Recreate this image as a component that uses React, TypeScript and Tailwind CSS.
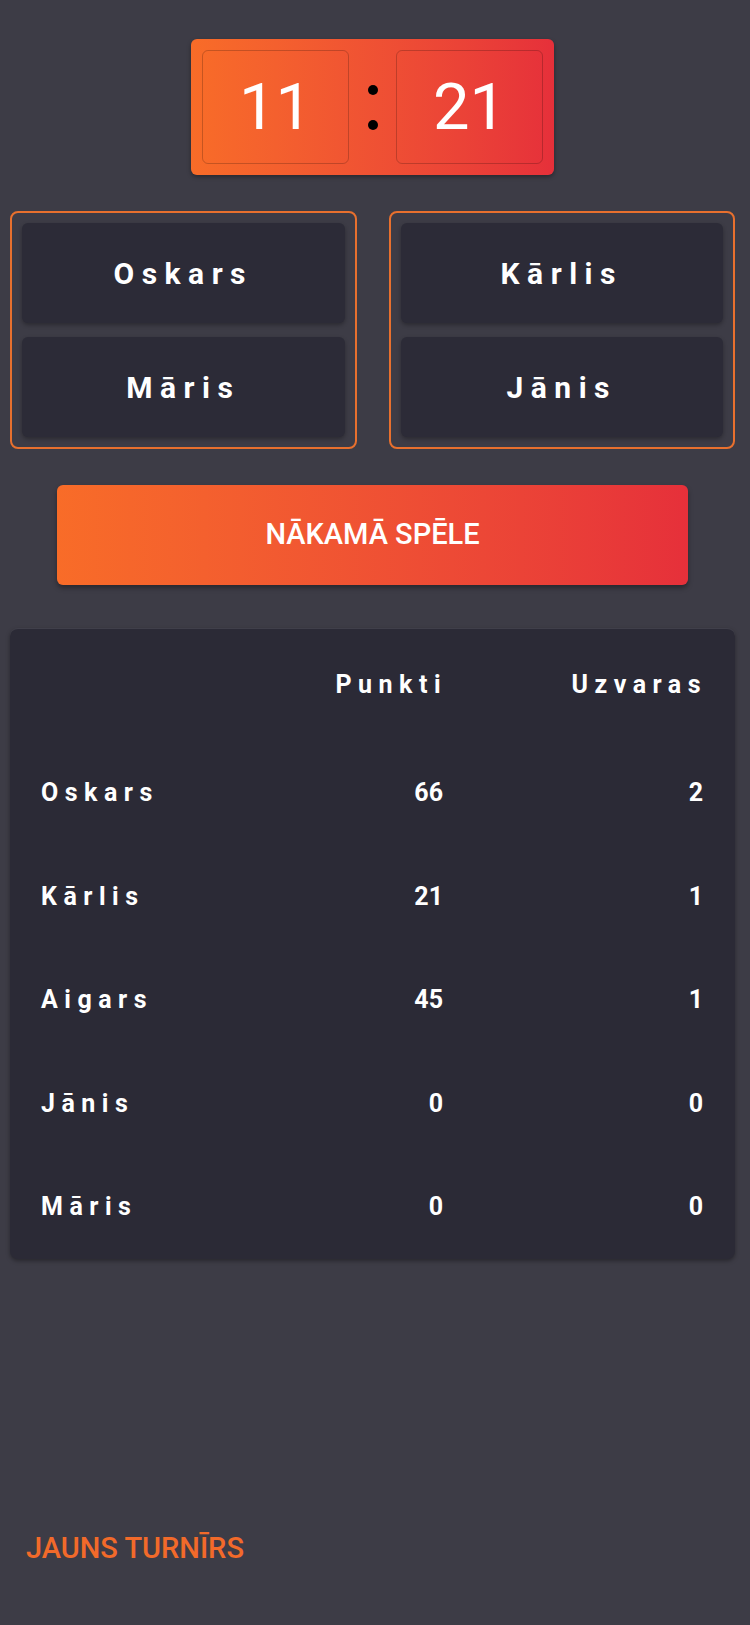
import React from 'react';

const teams = [
    ['Oskars', 'Māris'],
    ['Kārlis', 'Jānis'],
];

const standings = [
    { name: 'Oskars', points: 66, wins: 2 },
    { name: 'Kārlis', points: 21, wins: 1 },
    { name: 'Aigars', points: 45, wins: 1 },
    { name: 'Jānis', points: 0, wins: 0 },
    { name: 'Māris', points: 0, wins: 0 },
];

const ScoreBoard = () => {
    return (
        <div className="flex justify-center">
            <div className="flex items-center p-[11px] rounded-[6px] bg-gradient-to-r from-[#f86c28] to-[#e6303a] shadow-[0_2px_4px_rgba(0,0,0,0.35)]">
                <div className="w-[147px] h-[114px] rounded-[6px] border-[1.5px] border-black/20 flex items-center justify-center">
                    <span className="text-white text-[65px] leading-none font-normal">11</span>
                </div>
                {/* Colon */}
                <div className="w-[47px] flex flex-col items-center gap-[25px]">
                    <div className="w-[10px] h-[10px] rounded-full bg-black" />
                    <div className="w-[10px] h-[10px] rounded-full bg-black" />
                </div>
                <div className="w-[147px] h-[114px] rounded-[6px] border-[1.5px] border-black/20 flex items-center justify-center">
                    <span className="text-white text-[65px] leading-none font-normal">21</span>
                </div>
            </div>
        </div>
    );
};

const TeamCard = ({ players }: { players: string[] }) => {
    return (
        <div className="flex-1 flex flex-col gap-[14px] p-[10px] border-2 border-[#e8702e] rounded-[8px]">
            {players.map((p) => (
                <div
                    key={p}
                    className="h-[100px] rounded-[6px] bg-[#2c2b37] shadow-[0_2px_4px_rgba(0,0,0,0.3)] flex items-center justify-center"
                >
                    <span className="text-white text-[30px] font-bold tracking-[0.25em]">{p}</span>
                </div>
            ))}
        </div>
    );
};

export default function App() {
    return (
        <div
            className="min-h-[1625px] bg-[#3d3c46] flex flex-col pt-[39px] pl-[10px] pr-[15px]"
            style={{ fontFamily: 'Roboto, "Noto Sans", sans-serif' }}
        >
            <ScoreBoard />

            {/* Teams */}
            <div className="mt-[36px] flex gap-[32px]">
                {teams.map((t, i) => (
                    <TeamCard key={i} players={t} />
                ))}
            </div>

            {/* Next game */}
            <div className="mt-[36px] flex justify-center">
                <button className="w-[631px] h-[100px] rounded-[6px] bg-gradient-to-r from-[#f86c28] to-[#e6303a] shadow-[0_3px_5px_rgba(0,0,0,0.35)] text-white text-[29px] font-medium">
                    NĀKAMĀ SPĒLE
                </button>
            </div>

            {/* Standings */}
            <div className="mt-[43px] rounded-[8px] bg-[#2b2a36] border-t border-white/10 shadow-[0_2px_4px_rgba(0,0,0,0.35)] pl-[31px] pr-[32px]">
                <div className="grid grid-cols-[1fr_160px_260px] h-[112px] items-center text-white text-[25px] font-bold tracking-[0.26em]">
                    <div />
                    <div className="text-right -mr-[4px]">Punkti</div>
                    <div className="text-right -mr-[4px]">Uzvaras</div>
                </div>
                {standings.map((row) => (
                    <div
                        key={row.name}
                        className="grid grid-cols-[1fr_160px_260px] h-[103.5px] items-center text-white text-[25px] font-bold"
                    >
                        <div className="tracking-[0.26em]">{row.name}</div>
                        <div className="text-right">{row.points}</div>
                        <div className="text-right">{row.wins}</div>
                    </div>
                ))}
            </div>

            {/* Footer */}
            <div className="mt-auto pb-[60px] pl-[16px]">
                <button className="text-[#f26a2a] text-[29px] font-medium leading-[32px]">JAUNS TURNĪRS</button>
            </div>
        </div>
    );
}
